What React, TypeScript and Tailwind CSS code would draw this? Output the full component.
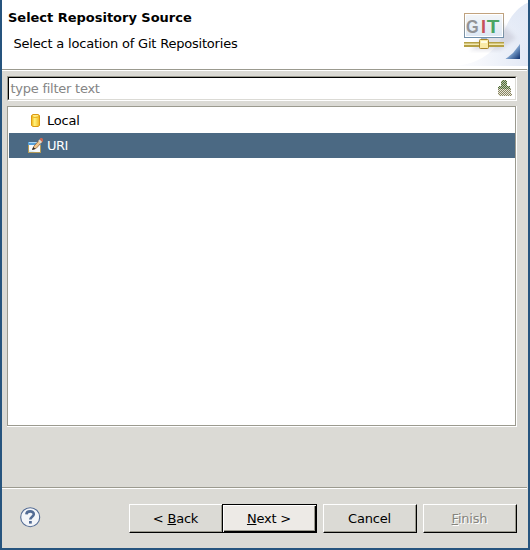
import type { ReactNode } from "react";

function GitBanner() {
  return (
    <svg className="h-[69px] w-[80px] shrink-0" viewBox="450 0 80 69">
      <defs>
        <linearGradient id="sweep" x1="0" y1="0" x2="1" y2="0">
          <stop offset="0" stopColor="#ffffff" />
          <stop offset="0.4" stopColor="#f5f7fc" />
          <stop offset="1" stopColor="#e1e8f5" />
        </linearGradient>
        <linearGradient id="curve" x1="0" y1="0" x2="0" y2="1">
          <stop offset="0" stopColor="#dfe7f5" />
          <stop offset="1" stopColor="#e9eef8" stopOpacity="0" />
        </linearGradient>
        <linearGradient id="corner" x1="0.35" y1="0.35" x2="1" y2="1">
          <stop offset="0" stopColor="#b9cee8" />
          <stop offset="0.35" stopColor="#7095c3" />
          <stop offset="0.9" stopColor="#1b3f7b" />
        </linearGradient>
        <linearGradient id="panel" x1="0" y1="0" x2="0" y2="1">
          <stop offset="0" stopColor="#f4f6f8" />
          <stop offset="1" stopColor="#dce7f4" />
        </linearGradient>
        <linearGradient id="frame" x1="0" y1="0" x2="0" y2="1">
          <stop offset="0" stopColor="#c2a37e" />
          <stop offset="1" stopColor="#6f8fab" />
        </linearGradient>
        <filter id="soft"><feGaussianBlur stdDeviation="2" /></filter>
      </defs>
      <path d="M450 66C475 66 494 54 503 35 508 19 517 7 530 2V66Z" fill="url(#sweep)" />
      <path d="M503 35C508 19 517 7 530 2V50H503Z" fill="url(#curve)" />
      <path d="M470 50L500 22 516 38 500 50Z" fill="#b9b9c8" opacity=".45" filter="url(#soft)" />
      <rect x="464.5" y="13.5" width="39" height="24" fill="url(#panel)" stroke="url(#frame)" />
      <rect x="465.5" y="14.5" width="37" height="22" fill="none" stroke="#fff" />
      <g fontFamily="'Liberation Sans', Arial, sans-serif" fontWeight="700" fontSize="18">
        <text x="466" y="32.5" fill="#929396" textLength="12.5" lengthAdjust="spacingAndGlyphs">G</text>
        <text x="481" y="32.5" fill="#c7515c">I</text>
        <text x="486.8" y="32.5" fill="#4ba565" textLength="12.4" lengthAdjust="spacingAndGlyphs">T</text>
      </g>
      <rect x="481" y="38" width="6" height="2" fill="#a3bad0" />
      <rect x="464" y="42" width="40" height="5" fill="#b5a044" />
      <rect x="464" y="43.5" width="40" height="1.5" fill="#f1e8b2" />
      <rect x="479.5" y="39.5" width="9" height="9" rx="1" fill="#faeaa6" stroke="#a98529" />
      <path d="M481 41H487V43H481Z" fill="#fffbe1" />
      <path d="M520 44V59H505.5C513 56 518 51 520 44Z" fill="url(#corner)" />
      <path d="M520 44V59H505.5L513 53Z" fill="url(#corner)" />
    </svg>
  );
}

function DatabaseIcon() {
  return (
    <svg className="h-4 w-4" viewBox="0 0 16 16">
      <defs>
        <linearGradient id="gold" x1="0" x2="1">
          <stop offset="0" stopColor="#f0b312" />
          <stop offset=".4" stopColor="#fff27d" />
          <stop offset="1" stopColor="#f0b71d" />
        </linearGradient>
      </defs>
      <path d="M3.5 2.5L5 1.5H10L11.5 2.5V12.5L10 13.5H5L3.5 12.5Z" fill="url(#gold)" stroke="#dc9a12" />
      <path d="M4 3.5L5.5 4.5H9.5L11 3.5" fill="none" stroke="#edb42b" />
      <path d="M5 2.5H10" stroke="#ffe985" />
    </svg>
  );
}

function EditIcon() {
  return (
    <svg className="h-4 w-4" viewBox="0 0 16 16">
      <rect x="0.5" y="4.5" width="12" height="10" fill="#f8fbfd" stroke="#b49b58" />
      <rect x="0" y="4" width="13" height="3" fill="#559fd9" />
      <rect x="1" y="4" width="8" height="1" fill="#a9d4f2" />
      <path d="M1 12L8 14H1Z" fill="#d8eaf6" />
      <path d="M4.7 11.3L6 8 12 1.5 14.5 3.5 8.2 10.3Z" fill="#f0c68c" stroke="#8e6543" strokeWidth=".8" />
      <path d="M11.5 1.5L12.5 0H14L15 1V3L14 4Z" fill="#ca6753" />
      <path d="M10.2 3L11.5 1.5 14 4 12.5 5.5Z" fill="#dddcd7" />
      <path d="M4 12L5.2 9 7.5 11Z" fill="#292929" />
    </svg>
  );
}

function ClearIcon() {
  return (
    <svg className="h-[17px] w-4" viewBox="0 0 16 17" shapeRendering="crispEdges">
      <defs>
        <pattern id="dither" width="2" height="2" patternUnits="userSpaceOnUse">
          <rect width="1" height="1" fill="#4f6b36" />
          <rect x="1" y="1" width="1" height="1" fill="#4f6b36" />
          <rect x="1" width="1" height="1" fill="#bcc4ae" />
          <rect y="1" width="1" height="1" fill="#bcc4ae" />
        </pattern>
        <pattern id="ditherLight" width="2" height="2" patternUnits="userSpaceOnUse">
          <rect width="1" height="1" fill="#87835f" />
          <rect x="1" y="1" width="1" height="1" fill="#87835f" />
          <rect x="1" width="1" height="1" fill="#e8e6d9" />
          <rect y="1" width="1" height="1" fill="#e8e6d9" />
        </pattern>
      </defs>
      <path d="M5 0H9V1H10V6H13V8H14V9H1V7H2V6H4V1H5Z" fill="url(#dither)" />
      <path d="M1 9H14V14H15V16H2V15H1Z" fill="url(#ditherLight)" />
    </svg>
  );
}

function HelpIcon() {
  return (
    <svg className="h-[21px] w-[21px]" viewBox="0 0 21 21">
      <circle cx="10.2" cy="10.2" r="9.5" fill="#f3f5f9" stroke="#536b94" strokeWidth="1.1" />
      <path d="M6.4 7.4C6.5 3.5 14 3.4 13.8 7.2 13.7 9.6 10.3 9.8 10.3 12.6" fill="none" stroke="#526b94" strokeWidth="2.6" />
      <rect x="9" y="14" width="2.8" height="2.6" fill="#526b94" />
    </svg>
  );
}

const raised = "border border-t-white border-l-white border-r-black border-b-black shadow-[inset_-1px_-1px_#9b9a8f]";

function Button({ children, className = "", disabled = false }: { children: ReactNode; className?: string; disabled?: boolean }) {
  return (
    <button disabled={disabled} className={`flex h-[29px] w-[94px] shrink-0 items-center justify-center pr-px whitespace-pre ${className || raised}`}>
      <span>{children}</span>
    </button>
  );
}

function Separator() {
  return <div className="mr-px h-[2px] shrink-0 border-t border-b border-t-[#9b9a8f] border-b-white" />;
}

export default function App() {
  return (
    <div className="flex h-[550px] w-[530px] flex-col overflow-hidden border-x-2 border-b-2 border-[#26547e] bg-[#dbdad5] font-['DejaVu_Sans',sans-serif] text-[13px] leading-[16px] tracking-[-0.2px] text-black">
      <header className="flex h-[69px] w-[526px] shrink-0 justify-between overflow-hidden bg-white">
        <div className="pt-[10px] pl-[6px]">
          <h1 className="leading-[16px] font-bold tracking-[-0.02px]">Select Repository Source</h1>
          <p className="mt-[10px] pl-[5.5px]">Select a location of Git Repositories</p>
        </div>
        <div className="-mr-[2px]"><GitBanner /></div>
      </header>
      <Separator />
      <main className="flex h-[416px] shrink-0 flex-col pt-[5px] pl-[5px]">
        <div className="h-[25px] w-[510px] shrink-0 border border-t-[#9b9a8f] border-r-white border-b-white border-l-[#9b9a8f]">
          <div className="flex h-[23px] items-center justify-between border border-t-black border-r-[#dbdad5] border-b-[#dbdad5] border-l-black bg-white pr-[2px] pl-[1.5px] text-[#858585]">
            <span className="tracking-[-0.25px]">type filter text</span>
            <ClearIcon />
          </div>
        </div>
        <div className="mt-[5px] h-[321px] w-[510px] shrink-0 border-r border-b border-white">
          <div className="h-[320px] border border-[#9b9a8f] bg-white pt-px pl-px">
            <div className="flex h-[25px] items-center gap-[3px] pl-[19px]"><DatabaseIcon /><span>Local</span></div>
            <div className="flex h-[25px] items-center gap-[3px] bg-[#4b6983] pl-[19px] text-white"><EditIcon /><span className="tracking-[-0.5px]">URI</span></div>
          </div>
        </div>
      </main>
      <Separator />
      <footer className="flex flex-1 items-start pt-[15px] pl-[18px]">
        <div className="mt-[3px] mr-[88px] w-[21px]"><HelpIcon /></div>
        <div className="flex">
          <Button>{"< "}<u>B</u>ack</Button>
          <Button className="-ml-px w-[95px] border border-black bg-[#edeae6] shadow-[inset_1px_1px_white,inset_-1px_-1px_black,inset_-2px_-2px_#9b9a8f]"><u>N</u>{"ext >"}</Button>
          <div className="ml-[6px] flex gap-[6px]">
            <Button>Cancel</Button>
            <Button disabled className={`${raised} text-[#85847e] [text-shadow:1px_1px_white]`}><u>F</u>inish</Button>
          </div>
        </div>
      </footer>
    </div>
  );
}
